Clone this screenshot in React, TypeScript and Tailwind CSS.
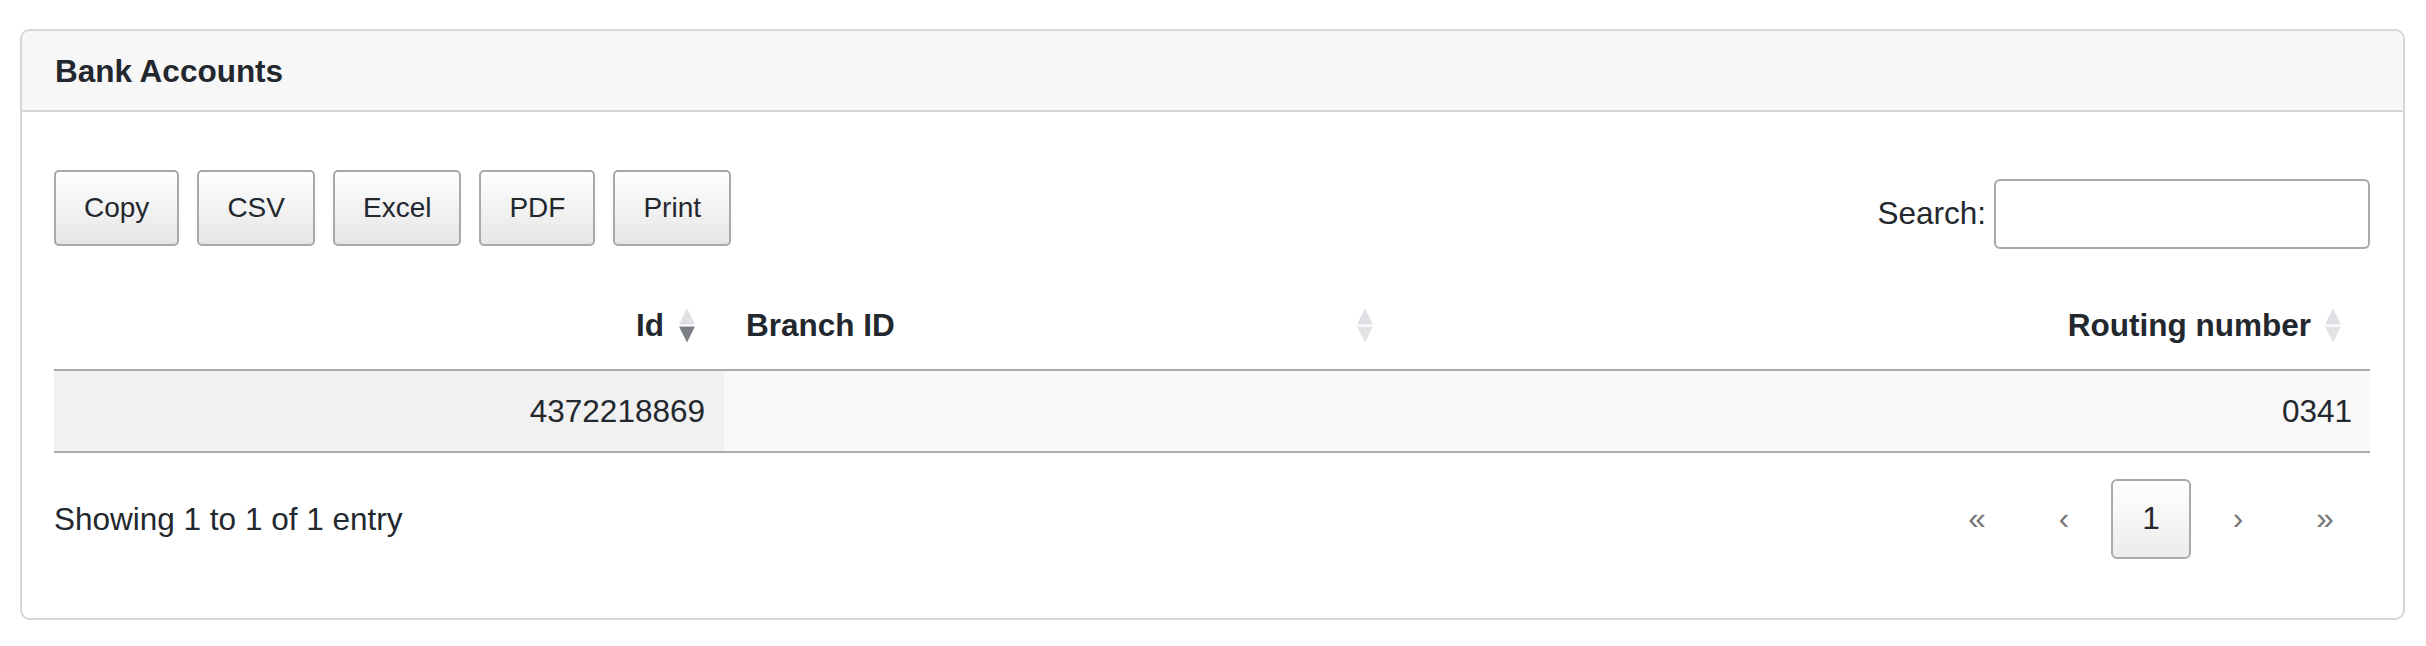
function SortIcon({ active }: { active?: boolean }) {
    return (
        <svg width="16" height="35" viewBox="0 0 16 35" className="shrink-0">
            <path d="M8 0.5 L15.5 15.5 Q16 16.5 15 16.5 L1 16.5 Q0 16.5 0.5 15.5 Z" fill="#dfe0e3" />
            <path d="M1 18.5 L15 18.5 Q16 18.5 15.5 19.5 L8 34.5 L0.5 19.5 Q0 18.5 1 18.5 Z" fill={active ? '#7c7e85' : '#e2e3e5'} />
        </svg>
    );
}

const exportButtons = ['Copy', 'CSV', 'Excel', 'PDF', 'Print'];

export default function App() {
    return (
        <div className="min-h-screen bg-white pl-[20px] pr-[21px] pt-[29px] font-['Liberation_Sans',Arial,sans-serif] text-[#23272e]">
            <div className="border-2 border-[#d6d6d6] rounded-[10px] overflow-hidden">
                <div className="bg-[#f7f7f7] border-b-2 border-[#d6d6d6] px-[33px] pt-[16px] pb-[15px]">
                    <h3 className="text-[31.5px] leading-[48px] font-bold">Bank Accounts</h3>
                </div>

                <div className="pl-[32px] pr-[33px] pt-[58px] pb-[59px]">
                    <div className="flex justify-between items-start">
                        <div className="flex gap-[18px]">
                            {exportButtons.map((label) => (
                                <button
                                    key={label}
                                    className="h-[76px] px-[28px] border-2 border-[#a9a9a9] rounded-[5px] bg-gradient-to-b from-white to-[#e6e6e6] text-[28px] text-[#23272e]"
                                >
                                    {label}
                                </button>
                            ))}
                        </div>
                        <label className="flex items-center mt-[9px] text-[31.5px]">
                            <span>Search:</span>
                            <input
                                type="text"
                                className="ml-[8px] w-[376px] h-[70px] border-2 border-[#a9a9a9] rounded-[6px] bg-white outline-none"
                            />
                        </label>
                    </div>

                    <table className="w-full mt-[32px] border-collapse text-[31.5px] leading-[48px]">
                        <thead>
                            <tr className="border-b-2 border-[#ababab]">
                                <th className="w-[670px] py-[20px] pr-[29px] font-bold">
                                    <div className="flex justify-end items-center gap-[15px]">
                                        <span>Id</span>
                                        <SortIcon active />
                                    </div>
                                </th>
                                <th className="w-[678px] py-[20px] pl-[22px] pr-[29px] font-bold">
                                    <div className="flex justify-between items-center">
                                        <span>Branch ID</span>
                                        <SortIcon />
                                    </div>
                                </th>
                                <th className="py-[20px] pr-[29px] font-bold">
                                    <div className="flex justify-end items-center gap-[14px]">
                                        <span>Routing number</span>
                                        <SortIcon />
                                    </div>
                                </th>
                            </tr>
                        </thead>
                        <tbody>
                            <tr className="border-b-2 border-[#ababab] bg-[#f9f9f9]">
                                <td className="py-[16px] pr-[19px] text-right bg-[#f1f1f1]">4372218869</td>
                                <td className="py-[16px] px-[20px]"></td>
                                <td className="py-[16px] pr-[18px] text-right">0341</td>
                            </tr>
                        </tbody>
                    </table>

                    <div className="flex justify-between items-center mt-[26px]">
                        <div className="text-[31.5px] leading-[48px]">Showing 1 to 1 of 1 entry</div>
                        <div className="flex items-center gap-[7px] mr-[5px] text-[31.5px]">
                            <span className="w-[80px] h-[80px] flex items-center justify-center text-[#777]">«</span>
                            <span className="w-[80px] h-[80px] flex items-center justify-center text-[#777]">‹</span>
                            <span className="w-[80px] h-[80px] flex items-center justify-center border-2 border-[#a9a9a9] rounded-[6px] bg-gradient-to-b from-white to-[#ececec] text-[#23272e]">1</span>
                            <span className="w-[80px] h-[80px] flex items-center justify-center text-[#777]">›</span>
                            <span className="w-[80px] h-[80px] flex items-center justify-center text-[#777]">»</span>
                        </div>
                    </div>
                </div>
            </div>
        </div>
    );
}
